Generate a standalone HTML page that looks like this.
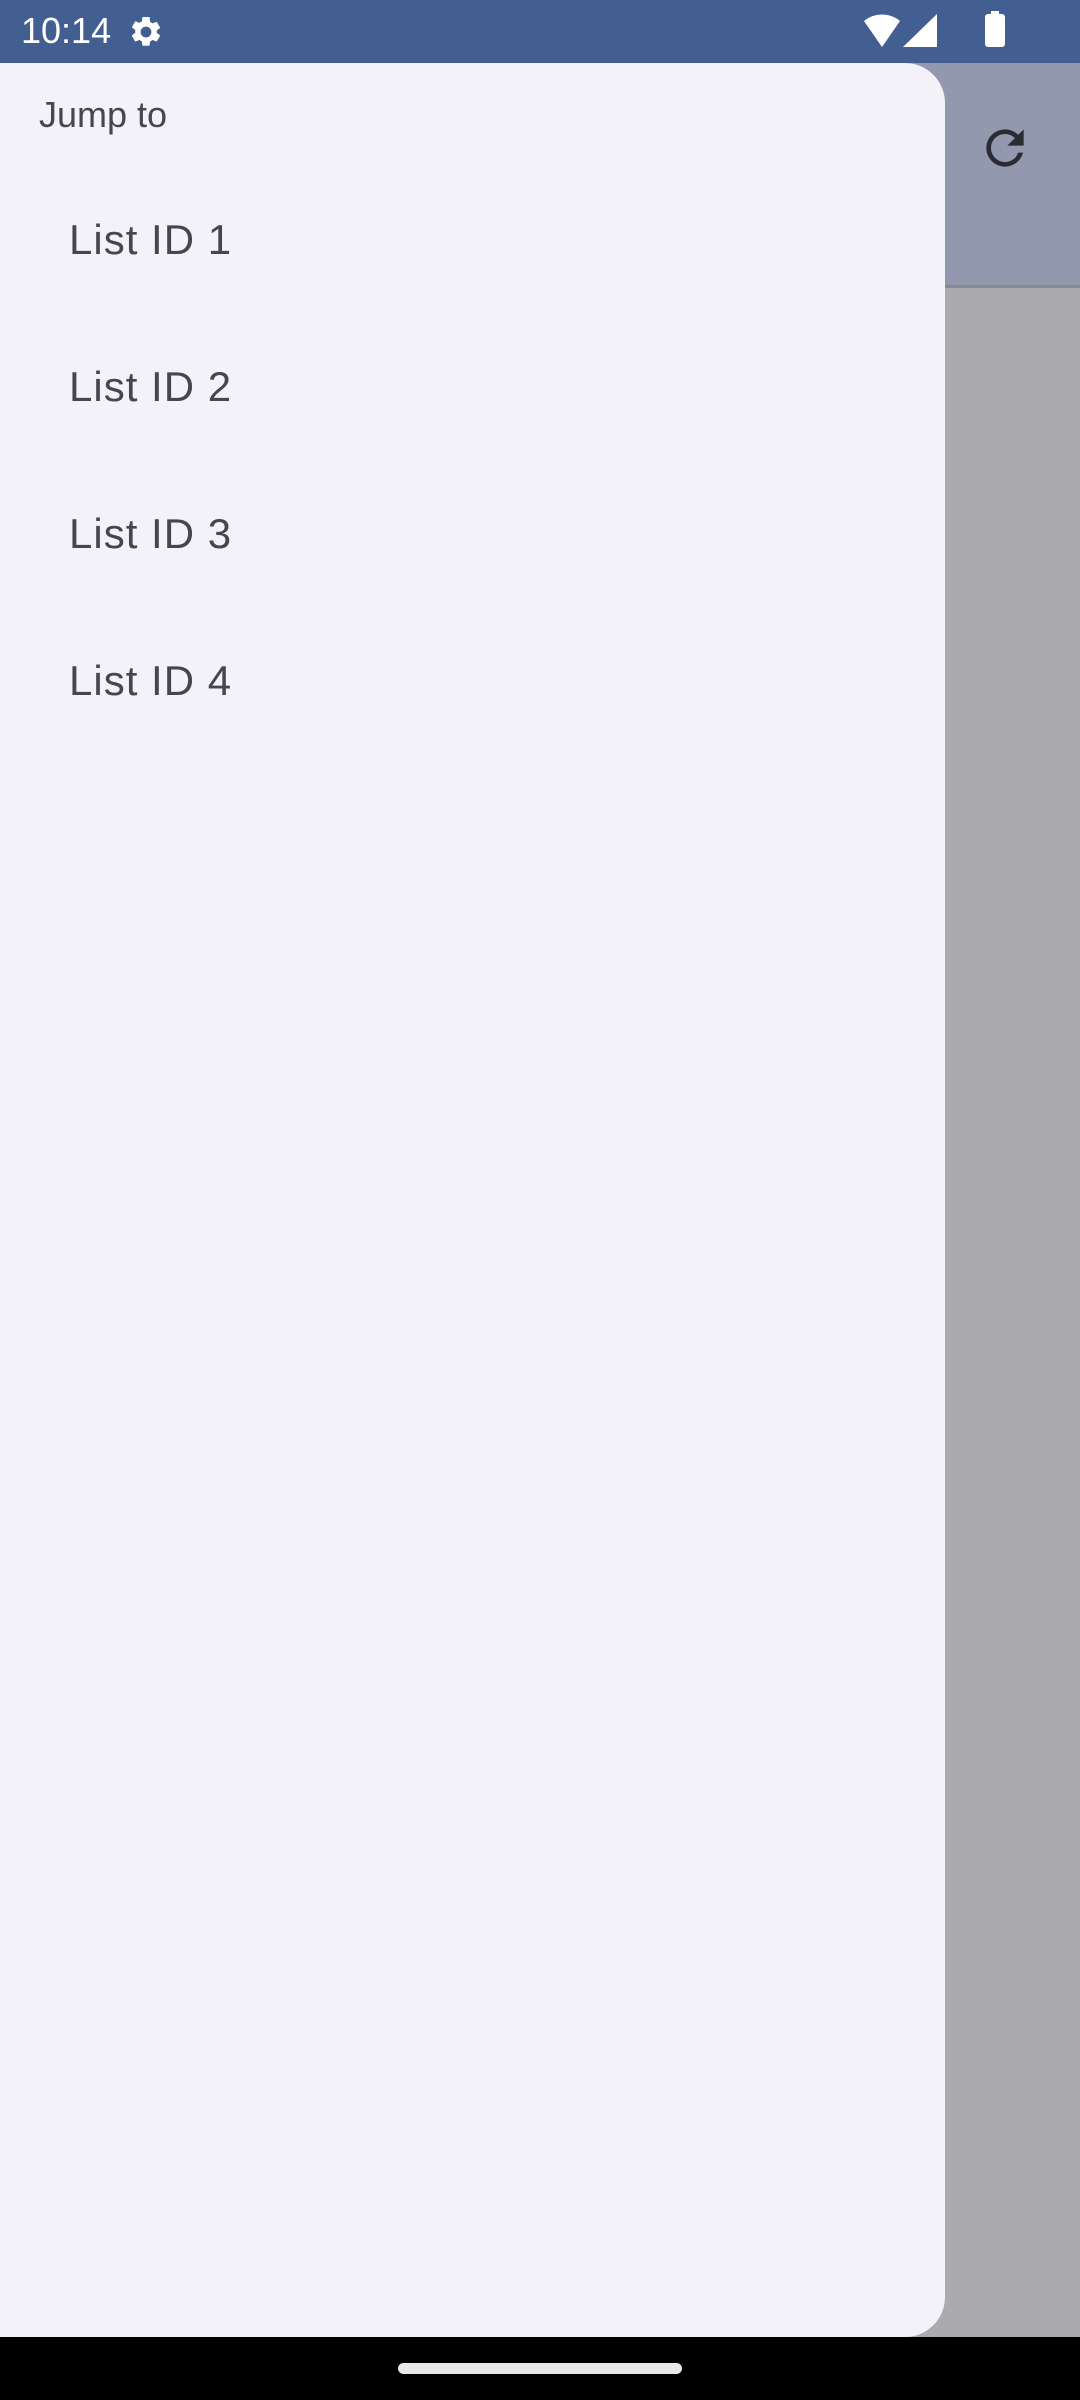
<!DOCTYPE html>
<html><head><meta charset="utf-8"><style>
*{margin:0;padding:0;box-sizing:border-box}
body{width:1080px;height:2400px;position:relative;overflow:hidden;background:#abaaad;font-family:"Liberation Sans",sans-serif}
.status{position:absolute;left:0;top:0;width:1080px;height:63px;background:#435f92;color:#fff}
.appbar{position:absolute;left:0;top:63px;width:1080px;height:225px;background:#9299ae;border-bottom:3px solid #8a8a95}
.drawer{position:absolute;left:0;top:63px;width:945px;height:2274px;background:#f3f2f8;border-radius:0 40px 40px 0}
.nav{position:absolute;left:0;top:2337px;width:1080px;height:63px;background:#000}
.handle{position:absolute;left:398px;top:2363px;width:284px;height:11px;border-radius:6px;background:#e8e8e8}
.jt{position:absolute;left:39px;top:94px;font-size:36px;color:#45464f}
.item{position:absolute;left:69px;font-size:42px;color:#45464f;letter-spacing:1px}
</style></head><body>
<div class="appbar"></div>
<svg style="position:absolute;left:977px;top:120px" width="56" height="56" viewBox="0 0 24 24"><path fill="#2b2c33" d="M17.65 6.35A7.96 7.96 0 0 0 12 4a8 8 0 1 0 7.73 10h-2.08A6 6 0 1 1 12 6c1.66 0 3.14.69 4.22 1.78L13 11h7V4l-2.35 2.35z"/></svg>
<div class="status">
<div style="position:absolute;left:21px;top:10px;font-size:36px">10:14</div>
<svg style="position:absolute;left:128px;top:14px" width="36" height="36" viewBox="0 0 24 24"><path fill="#fff" d="M19.14 12.94c.04-.3.06-.61.06-.94s-.02-.64-.07-.94l2.030-1.58a.49.49 0 0 0 .12-.61l-1.92-3.32a.49.49 0 0 0-.59-.22l-2.39.96c-.5-.38-1.03-.7-1.62-.94l-.36-2.54A.48.48 0 0 0 13.92 2h-3.84c-.24 0-.43.17-.47.41l-.36 2.54c-.59.24-1.13.57-1.62.94l-2.39-.96a.48.48 0 0 0-.59.22L2.73 8.47c-.12.21-.08.47.12.61l2.03 1.58c-.05.3-.09.63-.09.94s.02.64.07.94l-2.03 1.58a.49.49 0 0 0-.12.61l1.92 3.32c.12.22.37.29.59.22l2.39-.96c.5.38 1.03.7 1.62.94l.36 2.54c.05.24.24.41.48.41h3.84c.24 0 .44-.17.47-.41l.36-2.54c.59-.24 1.13-.56 1.62-.94l2.39.96c.22.08.47 0 .59-.22l1.92-3.32a.49.49 0 0 0-.12-.61l-2.01-1.58zM12 15.6A3.6 3.6 0 1 1 12 8.4a3.6 3.6 0 0 1 0 7.2z"/></svg>
<svg style="position:absolute;left:862px;top:13px" width="40" height="34" viewBox="0 0 40 34"><path fill="#fff" d="M20 34 L2 8 A28 28 0 0 1 38 8 Z"/></svg>
<svg style="position:absolute;left:903px;top:14px" width="34" height="33" viewBox="0 0 34 33"><path fill="#fff" d="M34 0 V33 H0 Z"/></svg>
<div style="position:absolute;left:985px;top:14px;width:20px;height:33px;background:#fff;border-radius:3px"></div>
<div style="position:absolute;left:991px;top:11px;width:8px;height:4px;background:#fff"></div>
</div>
<div class="drawer"></div>
<div class="jt">Jump to</div>
<div class="item" style="top:216px">List ID 1</div>
<div class="item" style="top:363px">List ID 2</div>
<div class="item" style="top:510px">List ID 3</div>
<div class="item" style="top:657px">List ID 4</div>
<div class="nav"></div>
<div class="handle"></div>
</body></html>
